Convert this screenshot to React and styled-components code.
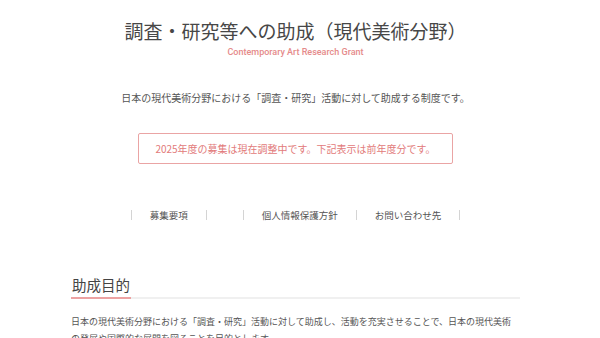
import React from 'react';
import styled, { createGlobalStyle } from 'styled-components';

const GlobalStyle = createGlobalStyle`
    html, body {
        margin: 0;
        padding: 0;
        background: #ffffff;
    }
    body {
        font-family: "Noto Sans CJK JP", "Noto Sans", sans-serif;
        color: #444444;
    }
    ul {
        margin: 0;
        padding: 0;
        list-style: none;
    }
`

//#region 外框
const Page = styled.div`
    width: 449px;
    margin-left: 71px;
    padding-top: 19px;
    display: flex;
    flex-direction: column;
    align-items: center;
`
//#endregion

//#region 標題區
const Title = styled.h1`
    margin: 0;
    font-size: 19px;
    line-height: 24px;
    font-weight: 400;
    color: #474747;
    white-space: nowrap;
`

const SubTitle = styled.p`
    margin: 3px 0 0;
    font-family: Roboto, "Liberation Sans", sans-serif;
    font-size: 9px;
    line-height: 12px;
    font-weight: 500;
    color: #e58a8a;
`

const Lead = styled.p`
    margin: 32px 0 0;
    font-size: 10px;
    line-height: 16px;
    color: #555555;
    white-space: nowrap;
`

const Notice = styled.div`
    margin-top: 27px;
    padding: 7px 16px;
    border: 1px solid #eaa4a4;
    border-radius: 2px;
    font-size: 10px;
    line-height: 15px;
    color: #e27a7a;
    white-space: nowrap;
`
//#endregion

//#region 選單
const Nav = styled.ul`
    margin-top: 46px;
    display: flex;
`

const NavItem = styled.li`
    padding: 0 18px;
    border-left: 1px solid #d4d4d4;
    font-size: 9.5px;
    line-height: 10px;
    color: #555555;
    white-space: nowrap;
    &:last-child {
        border-right: 1px solid #d4d4d4;
    }
`
//#endregion

//#region 內容
const Section = styled.section`
    align-self: stretch;
    margin-top: 55px;
`

const Heading = styled.h2`
    position: relative;
    margin: 0;
    padding: 0 1px 2px;
    border-bottom: 2px solid #f0f0f0;
    font-size: 14.5px;
    line-height: 20px;
    font-weight: 400;
    color: #444444;
    &::after {
        content: "";
        position: absolute;
        left: 0;
        bottom: -2px;
        width: 60px;
        height: 2px;
        background: #eca2a2;
    }
`

const Body = styled.p`
    margin: 14px 0 0;
    font-size: 9px;
    line-height: 17px;
    color: #555555;
`
//#endregion

const navList = ['募集要項', '', '個人情報保護方針', 'お問い合わせ先'];

export default function App() {
    return (
        <>
            <GlobalStyle />
            <Page>
                <Title>調査・研究等への助成（現代美術分野）</Title>
                <SubTitle>Contemporary Art Research Grant</SubTitle>
                <Lead>日本の現代美術分野における「調査・研究」活動に対して助成する制度です。</Lead>
                <Notice>2025年度の募集は現在調整中です。下記表示は前年度分です。</Notice>
                <Nav>
                    {navList.map((item, i) => (
                        <NavItem key={i}>{item}</NavItem>
                    ))}
                </Nav>
                <Section>
                    <Heading>助成目的</Heading>
                    <Body>
                        日本の現代美術分野における「調査・研究」活動に対して助成し、活動を充実させることで、日本の現代美術の発展や国際的な展開を図ることを目的とします。
                    </Body>
                </Section>
            </Page>
        </>
    )
}
